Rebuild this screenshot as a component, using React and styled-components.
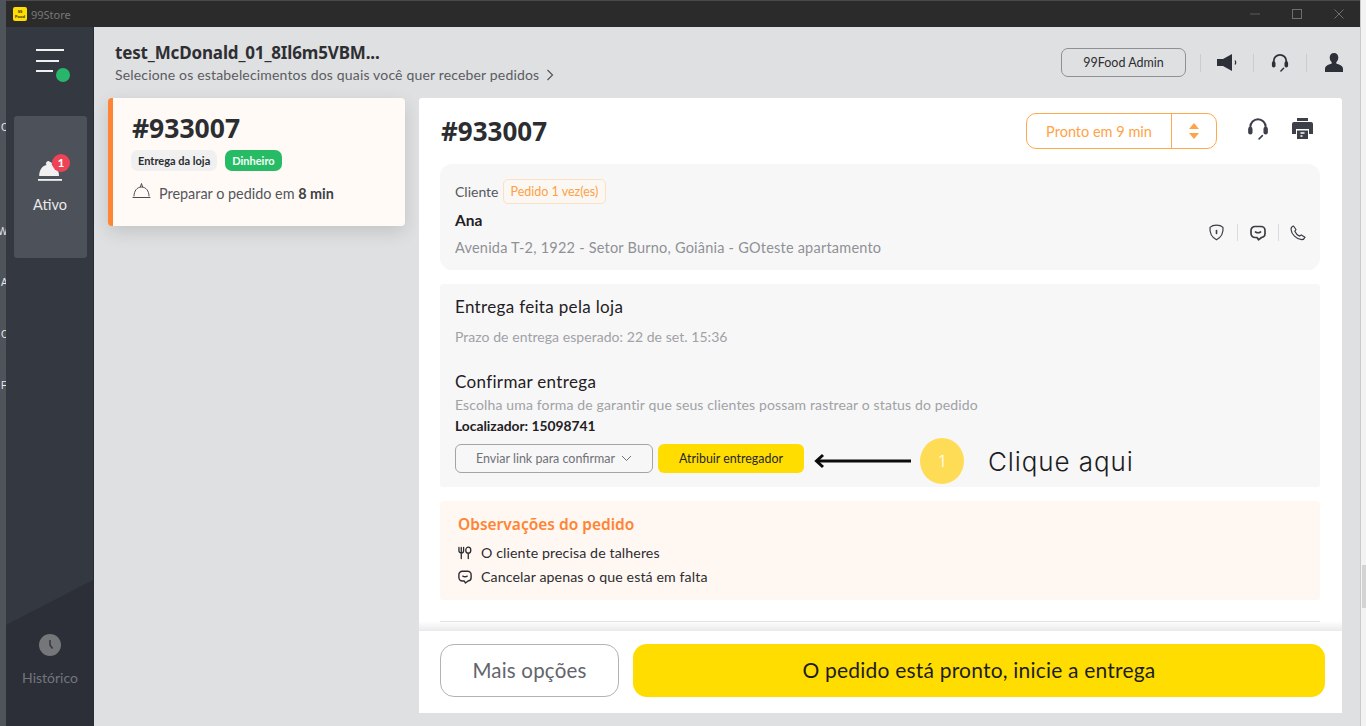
import React from "react";
import styled, { createGlobalStyle } from "styled-components";

const Global = createGlobalStyle`
  html, body { margin: 0; padding: 0; height: 100%; overflow: hidden; }
  body { font-family: "Lato", "Noto Sans", sans-serif; background: #4b4f56; }
  * { box-sizing: border-box; }
`;

const Page = styled.div`
  width: 1366px; height: 726px; display: flex; position: relative; overflow: hidden; background: #4b4f57;
`;
const DesktopEdge = styled.div`
  width: 6px; flex: none; position: relative; background: #4f535a;
  color: #e8e8e8; font: 10px "Liberation Sans", sans-serif; overflow: hidden;
`;
const EdgeLetter = styled.span`
  position: absolute; left: ${p => p.$x ?? 1}px; top: ${p => p.$y}px; line-height: 12px;
`;
const RightEdge = styled.div`
  width: 6px; flex: none; background: #f3f3f3; border-left: 1px solid #c9c9c9; position: relative;
`;
const EdgeThumb = styled.div`
  position: absolute; left: 1px; right: 0; top: 565px; height: 43px; background: #d4d4d4;
`;
const Window = styled.div`
  width: 1354px; flex: none; display: flex; flex-direction: column;
`;
const TitleBar = styled.div`
  height: 27px; flex: none; background: #2b2b2b; display: flex; align-items: center; padding: 0 0 0 7px;
  border-top: 1px solid #4a4a4a; gap: 4px;
`;
const TitleLogo = styled.div`
  width: 14px; height: 14px; border-radius: 2px; background: #ffdd00; color: #222; font: 800 4px/4.5px "Liberation Sans", sans-serif;
  text-align: center; padding-top: 3px;
`;
const TitleText = styled.span`
  font: 11px "Noto Sans", sans-serif; color: #77787a; flex: 1;
`;
const WinControls = styled.div`
  display: flex; align-items: center; color: #6e6e6e;
`;
const WinBtn = styled.div`
  width: 42px; display: flex; justify-content: center; align-items: center;
`;
const Body = styled.div`
  flex: 1; display: flex; min-height: 0;
`;
const Sidebar = styled.aside`
  width: 88px; flex: none; background: #343841; position: relative; display: flex; flex-direction: column; align-items: center;
  border-right: 1px solid #2a2d33;
  &::before {
    content: ""; position: absolute; inset: 0; background: #2c2f37;
    clip-path: polygon(0 598px, 100% 553px, 100% 100%, 0 100%);
  }
`;
const SideInner = styled.div`
  position: relative; flex: 1; width: 100%; display: flex; flex-direction: column; align-items: center;
`;
const MenuBtn = styled.div`
  position: relative; width: 34px; height: 34px; margin-top: 22px; margin-left: 6px;
`;
const ActiveTile = styled.div`
  margin-top: 33px; width: 73px; height: 142px; background: #4d5159; border-radius: 3px; display: flex; flex-direction: column;
  align-items: center; padding-top: 41px; color: #e9e9ea; font-size: 14.5px; gap: 9px; margin-left: 1px;
`;
const BellWrap = styled.div`
  position: relative; width: 26px; height: 30px;
`;
const Badge = styled.span`
  position: absolute; left: 15px; top: -3px; width: 18px; height: 18px; border-radius: 50%; background: #ee4356; color: #fff;
  font: 700 12px/18px "Lato", sans-serif; text-align: center;
`;
const HistoryItem = styled.div`
  margin-top: auto; margin-bottom: 40px; display: flex; flex-direction: column; align-items: center; gap: 13px;
  color: #73767d; font-size: 14px; margin-left: 1px;
`;
const Main = styled.main`
  flex: 1; background: #dfe0e2; display: flex; flex-direction: column; min-width: 0;
`;
const TopBar = styled.header`
  height: 71px; flex: none; display: flex; align-items: flex-start; justify-content: space-between; padding: 16px 17px 0 21px;
`;
const StoreName = styled.div`
  font: 700 17px/20px "Noto Sans", sans-serif; color: #2e2f33; letter-spacing: -0.15px;
`;
const StoreHint = styled.div`
  display: flex; align-items: center; gap: 7px; margin-top: 3px; font: 14px/18px "Lato", sans-serif; color: #5a5c61; letter-spacing: 0.17px;
`;
const TopActions = styled.div`
  display: flex; align-items: center; height: 29px; margin-top: 5px;
`;
const AdminBtn = styled.div`
  width: 125px; height: 29px; border: 1px solid #8e9094; border-radius: 7px; display: flex; align-items: center; justify-content: center;
  font: 12.5px "Lato", sans-serif; color: #2c2d31;
`;
const VSep = styled.span`
  width: 1px; height: ${p => p.$h ?? 18}px; background: ${p => p.$c ?? "#cbccce"}; flex: none;
  margin: 0 ${p => p.$r ?? 13}px 0 ${p => p.$l ?? 13}px;
`;
const Content = styled.div`
  flex: 1; display: flex; min-height: 0; padding: 0 0 13px 14px; gap: 14px;
`;
const OrderCard = styled.article`
  width: 297px; height: 128px; flex: none; background: #fffaf6; border-left: 5px solid #ff8433; border-radius: 4px;
  box-shadow: 0 6px 18px rgba(0,0,0,.13); padding: 14px 0 0 19px;
`;
const OrderNum = styled.div`
  font: 700 26.5px/32px "Noto Sans", sans-serif; color: #2c2d31;
`;
const TagRow = styled.div`
  display: flex; gap: 8px; margin-top: 6px; margin-left: -1px;
`;
const Tag = styled.span`
  height: 21px; padding: 0 7px; border-radius: 7px; display: flex; align-items: center; font: 700 11px "Lato", sans-serif;
  background: ${p => p.$green ? "#27bb66" : "#f0f0f0"}; color: ${p => p.$green ? "#f2fff7" : "#2c2d31"};
`;
const PrepRow = styled.div`
  display: flex; align-items: center; gap: 8px; margin-top: 14px; font: 14.4px "Lato", sans-serif; color: #54565b;
  b { color: #3e4045; font-weight: 700; }
`;
const DetailWrap = styled.section`
  width: 941px; flex: none; display: flex; position: relative; min-height: 0;
`;
const Detail = styled.div`
  width: 923px; flex: none; background: #fff; display: flex; flex-direction: column; border-radius: 3px; position: relative;
`;
const Scrollbar = styled.div`
  width: 18px; flex: none; background: #dfe0e2;
`;
const Scroll = styled.div`
  flex: 1; padding: 15px 22px 0 21px; min-height: 0; display: flex; flex-direction: column;
`;
const DetailHead = styled.div`
  display: flex; align-items: center; height: 36px;
`;
const DetailNum = styled.h1`
  margin: 0 0 0 1px; font: 700 26px "Noto Sans", sans-serif; color: #2c2d31; flex: 1;
`;
const TimeBtn = styled.div`
  width: 191px; height: 36px; border: 1px solid #ffa94d; border-radius: 10px; display: flex; color: #ffa347; font: 14.5px "Lato", sans-serif;
`;
const TimeLabel = styled.div`
  flex: 1; display: flex; align-items: center; justify-content: center; border-right: 1px solid #ffa94d;
`;
const TimeArrows = styled.div`
  width: 44px; display: flex; align-items: center; justify-content: center;
`;
const HeadIcons = styled.div`
  display: flex; align-items: center; gap: 23px; margin-left: 30px; margin-right: 7px; position: relative; top: -3px;
`;
const ClientCard = styled.div`
  margin-top: 15px; height: 106px; background: #f7f7f7; border-radius: 12px; padding: 15px 14px 0 15px; position: relative;
`;
const ClientRow = styled.div`
  display: flex; align-items: center; gap: 4px; font: 14px "Lato", sans-serif; color: #55575c;
`;
const Pill = styled.span`
  height: 25px; padding: 0 7px; border: 1px solid #fde0c3; border-radius: 5px; display: flex; align-items: center; color: #ff9f45; font-size: 12.5px;
  background: #fbf8f4;
`;
const ClientName = styled.div`
  font: 700 15.5px/20px "Lato", sans-serif; color: #1f2024; margin-top: 6px;
`;
const Address = styled.div`
  font: 14.5px/20px "Lato", sans-serif; color: #8f9196; margin-top: 8px; letter-spacing: .22px;
`;
const ClientActions = styled.div`
  position: absolute; right: 14px; top: 60px; display: flex; align-items: center; color: #3b3e46;
`;
const Delivery = styled.div`
  margin-top: 14px; height: 203px; background: #f7f7f7; border-radius: 3px; padding: 12px 15px 0;
`;
const H3 = styled.div`
  font: 17px/22px "Lato", sans-serif; color: #1f2024; letter-spacing: .33px; margin-top: ${p => p.$mt ?? 0}px;
`;
const Muted = styled.div`
  font: 14px/18px "Lato", sans-serif; color: #a0a2a6; margin-top: ${p => p.$mt ?? 0}px; letter-spacing: ${p => p.$ls ?? 0.05}px;
`;
const Locator = styled.div`
  font: 700 13.8px/18px "Lato", sans-serif; color: #1f2024; margin-top: 3px;
`;
const BtnRow = styled.div`
  display: flex; gap: 5px; margin-top: 9px;
`;
const GhostSmall = styled.div`
  width: 198px; height: 29px; border: 1px solid #a2a4a8; border-radius: 6px; display: flex; align-items: center; justify-content: center; gap: 6px;
  font: 12.5px "Lato", sans-serif; color: #707277;
`;
const YellowSmall = styled.div`
  width: 146px; height: 29px; background: #ffdd00; border-radius: 6px; display: flex; align-items: center; justify-content: center;
  font: 12.4px "Lato", sans-serif; color: #26262a;
`;
const Obs = styled.div`
  margin-top: 14px; height: 99px; background: #fff7f2; border-radius: 3px; padding: 13px 18px 0;
`;
const ObsTitle = styled.div`
  font: 600 15.5px/20px "Noto Sans", sans-serif; color: #ff8433; margin-bottom: 7px;
`;
const ObsRow = styled.div`
  display: flex; align-items: center; gap: 9px; font: 14.2px/24px "Lato", sans-serif; color: #2c2d31; letter-spacing: .1px;
`;
const Footer = styled.div`
  height: 82px; flex: none; background: #fff; display: flex; gap: 14px; padding: 13px 17px 0 21px; position: relative;
  &::before {
    content: ""; position: absolute; left: 0; right: 0; top: -10px; height: 10px;
    background: linear-gradient(rgba(230,231,232,0), #e9eaeb);
  }
  &::after {
    content: ""; position: absolute; left: 21px; right: 22px; top: -10px; height: 1px; background: #e3e4e6;
  }
`;
const MoreBtn = styled.div`
  width: 179px; height: 53px; border: 1px solid #b1b3b7; border-radius: 14px; display: flex; align-items: center; justify-content: center;
  font: 20.5px "Lato", sans-serif; color: #63656b; letter-spacing: .2px; padding-bottom: 2px;
`;
const PrimaryBtn = styled.div`
  flex: 1; height: 53px; background: #ffdd00; border-radius: 14px; display: flex; align-items: center; justify-content: center;
  font: 21px "Lato", sans-serif; color: #1d1d20; letter-spacing: .2px; padding-bottom: 2px;
`;
const Annotation = styled.div`
  position: absolute; left: 395px; top: 340px; display: flex; align-items: center; height: 46px;
`;
const StepDot = styled.div`
  width: 44px; height: 46px; border-radius: 50%; background: #ffdc55; color: #fff; display: flex; align-items: center; justify-content: center;
  margin-left: 8px; font: 300 16px "Inter", sans-serif;
`;
const Hint = styled.div`
  margin-left: 24px; font: 300 26px "Inter", sans-serif; color: #1c1c1f; letter-spacing: .9px;
`;

const S = { fill: "none", stroke: "currentColor", strokeLinecap: "round", strokeLinejoin: "round" };

const MenuIcon = () => (
  <svg width="34" height="34" viewBox="0 0 34 34">
    <g stroke="#f1f1f2" strokeWidth="2" strokeLinecap="square">
      <path d="M1 1h26M1 12h21M1 22h15" />
    </g>
    <circle cx="27" cy="26" r="7" fill="#28b56c" />
  </svg>
);
const BellFilled = () => (
  <svg width="26" height="26" viewBox="0 0 26 26">
    <path d="M13 2a2 2 0 0 1 1.7 3c4.6 1 7.3 5 7.3 11H2.2C2.2 10 5 6 9.5 5A2 2 0 0 1 13 2z" fill="#f1f1f2" transform="translate(0 3)" />
    <rect x="1" y="22" width="24" height="1.8" fill="#f1f1f2" />
  </svg>
);
const ClockDot = () => (
  <svg width="22" height="22" viewBox="0 0 22 22">
    <circle cx="11" cy="11" r="11" fill="#75767a" />
    <path d="M11 6v5l2.500 3.500" fill="none" stroke="#34363c" strokeWidth="1.5" />
  </svg>
);
const Chevron = ({ w = 8, h = 12, c = "#54565b" }) => (
  <svg width={w} height={h} viewBox="0 0 8 12"><path d="M1.5 1l5 5-5 5" fill="none" stroke={c} strokeWidth="1.2" /></svg>
);
const Megaphone = () => (
  <svg width="20" height="18" viewBox="0 0 20 18">
    <path d="M0 5h6l9-5v17l-9-5H0z" fill="#2d3038" />
    <path d="M18 6.500c.8 1.200.8 2.800 0 4" fill="none" stroke="#2d3038" strokeWidth="1.3" />
  </svg>
);
const Headset = ({ s = 18, c = "#2d3038", w = 2 }) => (
  <svg width={s} height={s + 1} viewBox="0 0 20 21">
    <path d="M3 11V9a7 7 0 0 1 14 0v2" fill="none" stroke={c} strokeWidth={w} />
    <rect x="1" y="9" width="4" height="7" rx="2" fill={c} />
    <rect x="15" y="9" width="4" height="7" rx="2" fill={c} />
    <path d="M14 17l-3 3" fill="none" stroke={c} strokeWidth={w * 0.8} strokeLinecap="round" />
  </svg>
);
const User = () => (
  <svg width="18" height="19" viewBox="0 0 18 19">
    <path d="M9 0c2.700 0 4.300 2 4.300 4.600 0 2-.9 3.700-2 4.700v1.200c2.600 1 6.700 2 6.700 5.500V19H0v-3c0-3.500 4.100-4.500 6.700-5.500V9.300c-1.100-1-2-2.700-2-4.700C4.700 2 6.300 0 9 0z" fill="#2d3038" />
  </svg>
);
const SmallBell = () => (
  <svg width="19" height="18" viewBox="0 0 19 18" {...S} strokeWidth="1" style={{ color: "#4a4c52", marginTop: -5 }}>
    <path d="M2 14c0-5 3-9 7.500-9S17 9 17 14" />
    <path d="M8.500 4.800 9.500 1.500l1 3.300" />
    <path d="M1 15.500h17" />
  </svg>
);
const UpDown = () => (
  <svg width="12" height="18" viewBox="0 0 12 18">
    <path d="M6 1l5 6H1z" fill="#ffa347" />
    <path d="M6 17l5-6H1z" fill="#ffa347" />
  </svg>
);
const Printer = () => (
  <svg width="21" height="21" viewBox="0 0 21 21">
    <path d="M5 0h11v3H5z" fill="#3d4048" />
    <path d="M2 4h17a2 2 0 0 1 2 2v10h-4v-5H4v5H0V6a2 2 0 0 1 2-2z" fill="#3d4048" />
    <path d="M5 12.500h11V21H5z" fill="#3d4048" />
    <path d="M8.500 15h4M8.500 18h2" stroke="#fff" strokeWidth="1.4" />
  </svg>
);
const ShieldPin = () => (
  <svg width="17" height="17" viewBox="0 0 17 17" {...S} strokeWidth="1.2">
    <path d="M8.500 1.200C11 1.200 13.500 2 15 3.400c.5 5.500-2 10-6.500 12.400C4 13.400 1.500 8.900 2 3.400 3.500 2 6 1.200 8.500 1.200z" />
    <path d="M8.500 6.500v3" strokeWidth="1.6" />
  </svg>
);
const Chat = ({ s = 16, w = 1.7 }) => (
  <svg width={s} height={s} viewBox="0 0 16 16" {...S} strokeWidth={w}>
    <path d="M5 1.500h6A4 4 0 0 1 15 5.500v3a4 4 0 0 1-3.500 4L8.500 14.800 7 12.500H5a4 4 0 0 1-4-4v-3a4 4 0 0 1 4-4z" />
    <path d="M5.500 7c1.500 .9 3.500 .9 5 0" />
  </svg>
);
const Phone = () => (
  <svg width="16" height="16" viewBox="0 0 16 16" {...S} strokeWidth="1.2">
    <path d="M3.500 1 6 4.500 4.800 6.300c.8 2 2.700 3.900 4.800 4.800l1.700-1.200 3.700 2.400c-.6 1.500-1.700 2.400-3.300 2.400C6.500 14.500 1.200 9 1 4.300 1 2.800 2 1.500 3.500 1z" />
  </svg>
);
const Cutlery = () => (
  <svg width="14" height="14" viewBox="0 0 15 14" {...S} strokeWidth="1.4" style={{ color: "#2c2d31" }}>
    <path d="M1 1v3.500a2.500 2.500 0 0 0 5 0V1M3.500 1v12" />
    <ellipse cx="11" cy="4" rx="2.700" ry="3.200" />
    <path d="M11 7.500V13" />
  </svg>
);
const CaretDown = () => (
  <svg width="11" height="7" viewBox="0 0 11 7"><path d="M1 1l4.500 4.500L10 1" fill="none" stroke="#707277" strokeWidth="1" /></svg>
);
const ArrowLeft = () => (
  <svg width="98" height="16" viewBox="0 0 98 16">
    <path d="M97 8H3" stroke="#0b0b0b" strokeWidth="3" />
    <path d="M9 2 2.500 8 9 14" fill="none" stroke="#0b0b0b" strokeWidth="3" />
  </svg>
);

export default function App() {
  return (
    <>
      <Global />
      <Page>
        <DesktopEdge>
          <EdgeLetter $y={122}>C</EdgeLetter>
          <EdgeLetter $y={226} $x={-2}>W</EdgeLetter>
          <EdgeLetter $y={277}>A</EdgeLetter>
          <EdgeLetter $y={329}>C</EdgeLetter>
          <EdgeLetter $y={380}>F</EdgeLetter>
        </DesktopEdge>
        <Window>
          <TitleBar>
            <TitleLogo>99<br />Food</TitleLogo>
            <TitleText>99Store</TitleText>
            <WinControls>
              <WinBtn><svg width="10" height="10" viewBox="0 0 10 10"><path d="M0 5h10" stroke="#5c5c5c" /></svg></WinBtn>
              <WinBtn><svg width="10" height="10" viewBox="0 0 10 10"><rect x=".5" y=".5" width="9" height="9" fill="none" stroke="#6e6e6e" /></svg></WinBtn>
              <WinBtn><svg width="10" height="10" viewBox="0 0 10 10"><path d="M.5.500l9 9M9.500.500l-9 9" stroke="#6e6e6e" /></svg></WinBtn>
            </WinControls>
          </TitleBar>
          <Body>
            <Sidebar>
              <SideInner>
                <MenuBtn><MenuIcon /></MenuBtn>
                <ActiveTile>
                  <BellWrap>
                    <BellFilled />
                    <Badge>1</Badge>
                  </BellWrap>
                  Ativo
                </ActiveTile>
                <HistoryItem>
                  <ClockDot />
                  Histórico
                </HistoryItem>
              </SideInner>
            </Sidebar>
            <Main>
              <TopBar>
                <div>
                  <StoreName>test_McDonald_01_8Il6m5VBM...</StoreName>
                  <StoreHint>
                    Selecione os estabelecimentos dos quais você quer receber pedidos
                    <Chevron />
                  </StoreHint>
                </div>
                <TopActions>
                  <AdminBtn>99Food Admin</AdminBtn>
                  <VSep $l={14} $r={16} />
                  <Megaphone />
                  <VSep $l={16} $r={17} />
                  <Headset />
                  <VSep $l={17} $r={18} />
                  <User />
                </TopActions>
              </TopBar>
              <Content>
                <OrderCard>
                  <OrderNum>#933007</OrderNum>
                  <TagRow>
                    <Tag>Entrega da loja</Tag>
                    <Tag $green>Dinheiro</Tag>
                  </TagRow>
                  <PrepRow>
                    <SmallBell />
                    <span>Preparar o pedido em <b>8 min</b></span>
                  </PrepRow>
                </OrderCard>
                <DetailWrap>
                  <Detail>
                    <Scroll>
                      <DetailHead>
                        <DetailNum>#933007</DetailNum>
                        <TimeBtn>
                          <TimeLabel>Pronto em 9 min</TimeLabel>
                          <TimeArrows><UpDown /></TimeArrows>
                        </TimeBtn>
                        <HeadIcons>
                          <Headset s={22} c="#3d4048" w={1.8} />
                          <Printer />
                        </HeadIcons>
                      </DetailHead>
                      <ClientCard>
                        <ClientRow>
                          Cliente
                          <Pill>Pedido 1 vez(es)</Pill>
                        </ClientRow>
                        <ClientName>Ana</ClientName>
                        <Address>Avenida T-2, 1922 - Setor Burno, Goiânia - GOteste apartamento</Address>
                        <ClientActions>
                          <ShieldPin />
                          <VSep $l={12} $r={12} $h={17} $c="#dcdcde" />
                          <Chat />
                          <VSep $l={12} $r={11} $h={17} $c="#dcdcde" />
                          <Phone />
                        </ClientActions>
                      </ClientCard>
                      <Delivery>
                        <H3>Entrega feita pela loja</H3>
                        <Muted $mt={10}>Prazo de entrega esperado: 22 de set. 15:36</Muted>
                        <H3 $mt={25}>Confirmar entrega</H3>
                        <Muted $mt={3} $ls={0.14}>Escolha uma forma de garantir que seus clientes possam rastrear o status do pedido</Muted>
                        <Locator>Localizador: 15098741</Locator>
                        <BtnRow>
                          <GhostSmall>Enviar link para confirmar <CaretDown /></GhostSmall>
                          <YellowSmall>Atribuir entregador</YellowSmall>
                        </BtnRow>
                      </Delivery>
                      <Obs>
                        <ObsTitle>Observações do pedido</ObsTitle>
                        <ObsRow><Cutlery />O cliente precisa de talheres</ObsRow>
                        <ObsRow><Chat s={14} w={1.6} />Cancelar apenas o que está em falta</ObsRow>
                      </Obs>
                    </Scroll>
                    <Footer>
                      <MoreBtn>Mais opções</MoreBtn>
                      <PrimaryBtn>O pedido está pronto, inicie a entrega</PrimaryBtn>
                    </Footer>
                    <Annotation>
                      <ArrowLeft />
                      <StepDot>1</StepDot>
                      <Hint>Clique aqui</Hint>
                    </Annotation>
                  </Detail>
                  <Scrollbar />
                </DetailWrap>
              </Content>
            </Main>
          </Body>
        </Window>
        <RightEdge><EdgeThumb /></RightEdge>
      </Page>
    </>
  );
}
